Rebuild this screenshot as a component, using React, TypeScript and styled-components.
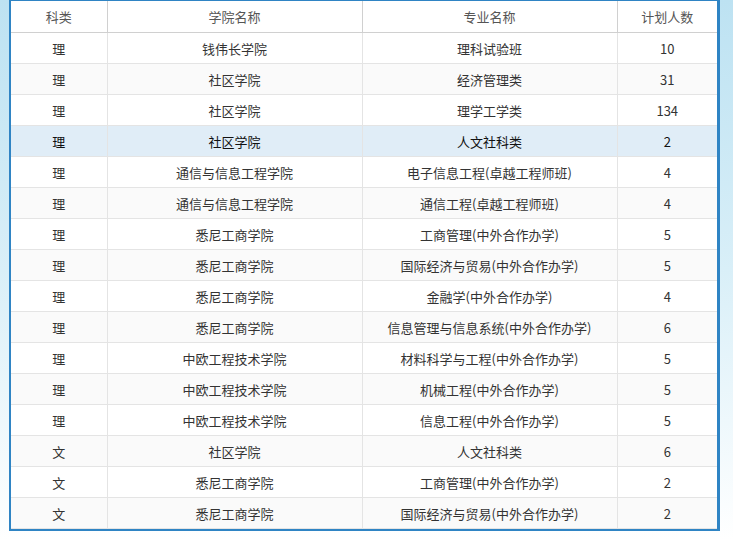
import React from "react";
import styled, { createGlobalStyle } from "styled-components";

const Global = createGlobalStyle`
  html, body { margin: 0; padding: 0; background: #fff; }
  body { font-family: "Noto Sans CJK SC", "Noto Sans", sans-serif; }
`;

const Page = styled.div`
  width: 733px;
  height: 540px;
  background: linear-gradient(to bottom, #bde2f2 0%, #d9eff8 50%, #ffffff 100%);
  padding: 0 10px 0 9px;
  box-sizing: border-box;
`;

const Frame = styled.div`
  border: 2px solid #2f84c4;
  border-top-width: 1px;
  background: #fff;
  width: 711px;
  box-sizing: border-box;
  padding-right: 2px;
  box-shadow: inset -1px 0 0 #2f84c4;
`;

const Table = styled.table`
  width: 706px;
  border-collapse: collapse;
  font-size: 13px;
  color: #333;
  table-layout: fixed;
`;

const Th = styled.th`
  height: 31px;
  padding: 0;
  font-weight: normal;
  color: #555;
  border: 1px solid #d0d0d0;
  border-top: none;
  &:first-child { border-left: none; }
  &:last-child { border-right: none; }
`;

const Tr = styled.tr<{ $odd: boolean; $hl: boolean }>`
  background: ${(p) => (p.$hl ? "#e0edf7" : p.$odd ? "#fafafa" : "#fff")};
  color: ${(p) => (p.$hl ? "#111" : "#333")};
`;

const Td = styled.td`
  height: 30px;
  text-align: center;
  border: 1px solid #e4e4e4;
  padding: 0;
  &:first-child { border-left: none; }
  &:last-child { border-right: none; }
`;

const rows: [string, string, string, number][] = [
  ["理", "钱伟长学院", "理科试验班", 10],
  ["理", "社区学院", "经济管理类", 31],
  ["理", "社区学院", "理学工学类", 134],
  ["理", "社区学院", "人文社科类", 2],
  ["理", "通信与信息工程学院", "电子信息工程(卓越工程师班)", 4],
  ["理", "通信与信息工程学院", "通信工程(卓越工程师班)", 4],
  ["理", "悉尼工商学院", "工商管理(中外合作办学)", 5],
  ["理", "悉尼工商学院", "国际经济与贸易(中外合作办学)", 5],
  ["理", "悉尼工商学院", "金融学(中外合作办学)", 4],
  ["理", "悉尼工商学院", "信息管理与信息系统(中外合作办学)", 6],
  ["理", "中欧工程技术学院", "材料科学与工程(中外合作办学)", 5],
  ["理", "中欧工程技术学院", "机械工程(中外合作办学)", 5],
  ["理", "中欧工程技术学院", "信息工程(中外合作办学)", 5],
  ["文", "社区学院", "人文社科类", 6],
  ["文", "悉尼工商学院", "工商管理(中外合作办学)", 2],
  ["文", "悉尼工商学院", "国际经济与贸易(中外合作办学)", 2],
];

export default function App() {
  return (
    <>
      <Global />
      <Page>
        <Frame>
          <Table>
            <colgroup>
              <col style={{ width: 96 }} />
              <col style={{ width: 255 }} />
              <col style={{ width: 255 }} />
              <col style={{ width: 100 }} />
            </colgroup>
            <thead>
              <tr>
                <Th>科类</Th>
                <Th>学院名称</Th>
                <Th>专业名称</Th>
                <Th>计划人数</Th>
              </tr>
            </thead>
            <tbody>
              {rows.map((r, i) => (
                <Tr key={i} $odd={i % 2 === 1} $hl={i === 3}>
                  <Td>{r[0]}</Td>
                  <Td>{r[1]}</Td>
                  <Td>{r[2]}</Td>
                  <Td>{r[3]}</Td>
                </Tr>
              ))}
            </tbody>
          </Table>
        </Frame>
      </Page>
    </>
  );
}
